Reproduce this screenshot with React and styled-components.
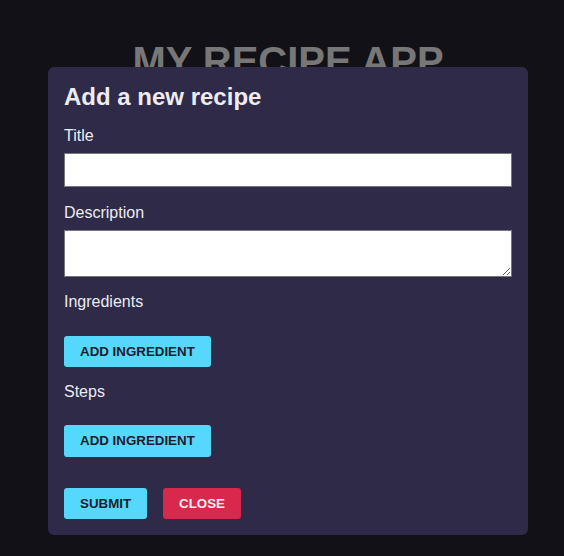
import styled, { createGlobalStyle } from "styled-components";

const GlobalStyle = createGlobalStyle`
  html, body {
    margin: 0;
    padding: 0;
    background: #121118;
    font-family: "Liberation Sans", Arial, sans-serif;
  }
  * {
    box-sizing: border-box;
  }
`;

const Page = styled.div`
  position: relative;
  min-height: 556px;
  padding: 38px 0 0 12px;
`;

const AppTitle = styled.h1`
  margin: 0;
  text-align: center;
  font-size: 40px;
  font-weight: 700;
  color: #777777;
  line-height: 1.15;
`;

const Modal = styled.div`
  position: absolute;
  top: 67px;
  left: 48px;
  width: 480px;
  padding: 16px;
  border-radius: 6px;
  background: #2e2a47;
  color: #ececf2;
`;

const Heading = styled.h2`
  margin: 0 0 16px;
  font-size: 24px;
  font-weight: 700;
  line-height: 1.15;
`;

const Field = styled.div`
  display: flex;
  flex-direction: column;
  align-items: flex-start;
  gap: ${(p) => p.$gap || 8}px;
  margin-bottom: ${(p) => p.$space || 16}px;
`;

const Label = styled.label`
  font-size: 16px;
  line-height: 1.15;
`;

const TextInput = styled.input`
  width: 100%;
  height: 34px;
  margin: 0;
  border: 1px solid #767676;
  background: #ffffff;
  font-family: inherit;
  font-size: 14px;
  padding: 4px 6px;
`;

const TextArea = styled.textarea`
  display: block;
  width: 100%;
  height: 47px;
  margin: 0;
  border: 1px solid #767676;
  background: #ffffff;
  font-family: inherit;
  font-size: 14px;
  padding: 4px 6px;
`;

const Button = styled.button`
  border: none;
  border-radius: 3px;
  padding: 8px 16px;
  font-family: "Liberation Sans", Arial, sans-serif;
  font-size: 13.333px;
  font-weight: 700;
  line-height: 1.15;
  text-transform: uppercase;
  cursor: pointer;
  background: ${(p) => (p.$danger ? "#d8294c" : "#56d7fc")};
  color: ${(p) => (p.$danger ? "#f1eef2" : "#1e1c2e")};
`;

const Actions = styled.div`
  display: flex;
  gap: 16px;
  margin-top: 31px;
`;

export default function App() {
  return (
    <>
      <GlobalStyle />
      <Page>
        <AppTitle>MY RECIPE APP</AppTitle>
        <Modal>
          <Heading>Add a new recipe</Heading>
          <Field $space={17}>
            <Label>Title</Label>
            <TextInput type="text" />
          </Field>
          <Field>
            <Label>Description</Label>
            <TextArea />
          </Field>
          <Field $gap={24}>
            <Label>Ingredients</Label>
            <Button>Add ingredient</Button>
          </Field>
          <Field $gap={24}>
            <Label>Steps</Label>
            <Button>Add ingredient</Button>
          </Field>
          <Actions>
            <Button>Submit</Button>
            <Button $danger>Close</Button>
          </Actions>
        </Modal>
      </Page>
    </>
  );
}
